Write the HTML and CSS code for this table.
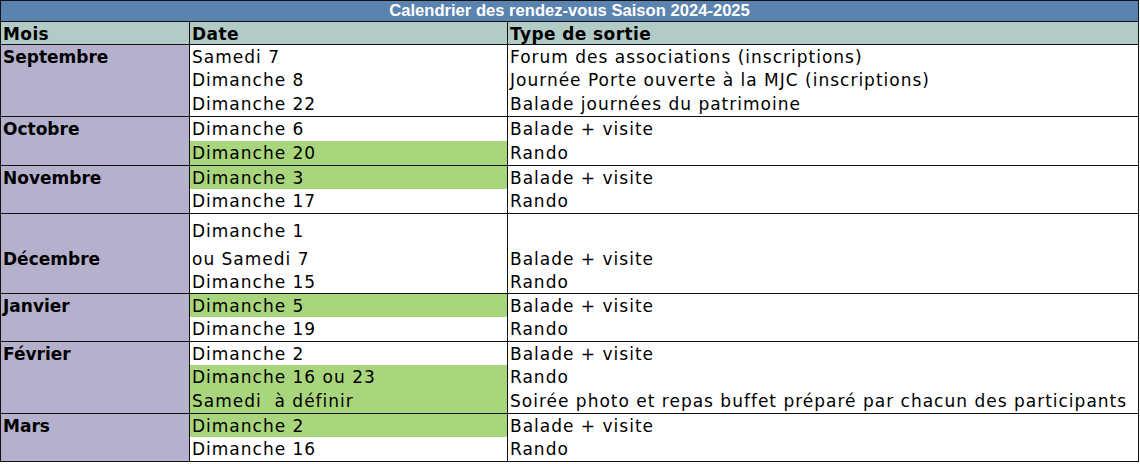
FILE: index.html
```html
<!DOCTYPE html>
<html lang="fr">
<head>
<meta charset="utf-8">
<title>Calendrier des rendez-vous Saison 2024-2025</title>
<link rel="stylesheet" href="styles.css">
</head>
<body>
<table class="cal">
  <colgroup>
    <col class="c-mois">
    <col class="c-date">
    <col class="c-type">
  </colgroup>
  <thead>
    <tr class="r-title"><th colspan="3" class="title">Calendrier des rendez-vous Saison 2024-2025</th></tr>
    <tr class="r-head"><th>Mois</th><th>Date</th><th>Type de sortie</th></tr>
  </thead>
  <tbody class="grp">
    <tr class="r first"><td rowspan="3" class="mois">Septembre</td><td>Samedi 7</td><td>Forum des associations (inscriptions)</td></tr>
    <tr class="r"><td>Dimanche 8</td><td>Journée Porte ouverte à la MJC (inscriptions)</td></tr>
    <tr class="r"><td>Dimanche 22</td><td>Balade journées du patrimoine</td></tr>
  </tbody>
  <tbody class="grp">
    <tr class="r"><td rowspan="2" class="mois">Octobre</td><td>Dimanche 6</td><td>Balade + visite</td></tr>
    <tr class="r"><td class="green">Dimanche 20</td><td>Rando</td></tr>
  </tbody>
  <tbody class="grp">
    <tr class="r first"><td rowspan="2" class="mois">Novembre</td><td class="green">Dimanche 3</td><td>Balade + visite</td></tr>
    <tr class="r"><td>Dimanche 17</td><td>Rando</td></tr>
  </tbody>
  <tbody class="grp">
    <tr class="r-d1"><td rowspan="3" class="mois mid">Décembre</td><td>Dimanche 1</td><td></td></tr>
    <tr class="r-d2"><td>ou Samedi 7</td><td>Balade + visite</td></tr>
    <tr class="r first"><td>Dimanche 15</td><td>Rando</td></tr>
  </tbody>
  <tbody class="grp">
    <tr class="r first"><td rowspan="2" class="mois">Janvier</td><td class="green">Dimanche 5</td><td>Balade + visite</td></tr>
    <tr class="r"><td>Dimanche 19</td><td>Rando</td></tr>
  </tbody>
  <tbody class="grp">
    <tr class="r first"><td rowspan="3" class="mois">Février</td><td>Dimanche 2</td><td>Balade + visite</td></tr>
    <tr class="r"><td class="green">Dimanche 16 ou 23</td><td>Rando</td></tr>
    <tr class="r"><td class="green">Samedi&nbsp; à définir</td><td>Soirée photo et repas buffet préparé par chacun des participants</td></tr>
  </tbody>
  <tbody class="grp">
    <tr class="r first"><td rowspan="2" class="mois">Mars</td><td class="green">Dimanche 2</td><td>Balade + visite</td></tr>
    <tr class="r"><td>Dimanche 16</td><td>Rando</td></tr>
  </tbody>
</table>
</body>
</html>
```

FILE: styles.css
```css
html, body {
  margin: 0;
  padding: 0;
  background: #ffffff;
}

.cal {
  border-collapse: collapse;
  table-layout: fixed;
  width: 1138px;
  font-family: "Comic Sans MS", "DejaVu Sans", sans-serif;
  font-size: 17px;
  letter-spacing: 1px;
  color: #000;
}

.c-mois { width: 189px; }
.c-date { width: 318px; }
.c-type { width: 631px; }

.cal th,
.cal td {
  padding: 0 0 2px 2px;
  line-height: 20px;
  text-align: left;
  vertical-align: bottom;
  white-space: nowrap;
  border-left: 1px solid #111;
  border-right: 1px solid #111;
}

.cal .title {
  height: 20px;
  padding: 0;
  background: #5a83b0;
  color: #fff;
  text-align: center;
  vertical-align: middle;
  font-family: "Liberation Sans", Arial, sans-serif;
  font-weight: bold;
  font-size: 16.6px;
  letter-spacing: 0;
  line-height: 18px;
  border: 1px solid #111;
}

.cal .r-head th {
  height: 22px;
  padding-bottom: 0;
  background: #b3cbc7;
  font-weight: bold;
  letter-spacing: 0.4px;
  border-top: 1px solid #111;
  border-bottom: 1px solid #111;
}

.grp {
  border-top: 1px solid #111;
  border-bottom: 1px solid #111;
}

.r td { height: 22px; }
.cal .r.first td { height: 22px; padding-bottom: 1px; }
.cal .r-d1 td,
.cal .r-d2 td { height: 27px; padding-bottom: 1px; }

.cal .mois {
  background: #b5b1cd;
  font-weight: bold;
  letter-spacing: 0;
  vertical-align: top;
}

.cal .r td.mois,
.cal .r.first td.mois {
  padding-top: 2px;
}

.cal .r-d1 td.mois.mid {
  vertical-align: middle;
  padding-top: 12px;
  padding-bottom: 2px;
}

.cal .green {
  background: #a9d57c;
}
```
